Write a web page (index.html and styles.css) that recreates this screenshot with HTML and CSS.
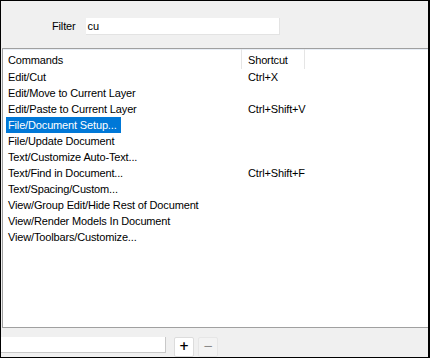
FILE: index.html
```html
<!DOCTYPE html>
<html>
<head>
<meta charset="utf-8">
<link rel="stylesheet" href="styles.css">
</head>
<body>
<div class="window">
  <div class="filter-bar">
    <span class="filter-label">Filter</span>
    <div class="filter-input">cu</div>
  </div>
  <div class="list">
    <div class="row header">
      <div class="cell cmd">Commands</div>
      <div class="cell sc">Shortcut</div>
      <div class="cell rest"></div>
    </div>
    <div class="row"><div class="cell cmd"><span class="txt">Edit/Cut</span></div><div class="cell sc">Ctrl+X</div></div>
    <div class="row"><div class="cell cmd"><span class="txt">Edit/Move to Current Layer</span></div><div class="cell sc"></div></div>
    <div class="row"><div class="cell cmd"><span class="txt">Edit/Paste to Current Layer</span></div><div class="cell sc">Ctrl+Shift+V</div></div>
    <div class="row"><div class="cell cmd"><span class="txt selected">File/Document Setup...</span></div><div class="cell sc"></div></div>
    <div class="row"><div class="cell cmd"><span class="txt">File/Update Document</span></div><div class="cell sc"></div></div>
    <div class="row"><div class="cell cmd"><span class="txt">Text/Customize Auto-Text...</span></div><div class="cell sc"></div></div>
    <div class="row"><div class="cell cmd"><span class="txt">Text/Find in Document...</span></div><div class="cell sc">Ctrl+Shift+F</div></div>
    <div class="row"><div class="cell cmd"><span class="txt">Text/Spacing/Custom...</span></div><div class="cell sc"></div></div>
    <div class="row"><div class="cell cmd"><span class="txt">View/Group Edit/Hide Rest of Document</span></div><div class="cell sc"></div></div>
    <div class="row"><div class="cell cmd"><span class="txt">View/Render Models In Document</span></div><div class="cell sc"></div></div>
    <div class="row"><div class="cell cmd"><span class="txt">View/Toolbars/Customize...</span></div><div class="cell sc"></div></div>
  </div>
  <div class="bottom-bar">
    <div class="bottom-input"></div>
    <div class="btn">+</div>
    <div class="btn disabled">−</div>
  </div>
</div>
</body>
</html>
```
FILE: styles.css
```css
html, body {
  margin: 0;
  padding: 0;
  background: #ffffff;
}
.window {
  box-sizing: border-box;
  width: 430px;
  height: 358px;
  border: 1px solid #000;
  border-right-width: 2px;
  background: #f0f0f0;
  font-family: "Liberation Sans", Arial, sans-serif;
  font-size: 11px;
  letter-spacing: -0.15px;
  color: #000;
  display: flex;
  flex-direction: column;
  overflow: hidden;
}
.filter-bar {
  height: 47px;
  box-sizing: border-box;
  padding: 17px 0 0 51px;
  display: flex;
  align-items: flex-start;
  gap: 10px;
}
.filter-label {
  line-height: 17px;
  height: 17px;
  color: #000;
}
.filter-input {
  width: 194px;
  height: 17px;
  box-sizing: border-box;
  background: #fff;
  border-bottom: 1px solid #e3e3e3;
  border-right: 1px solid #e3e3e3;
  padding-left: 2px;
  line-height: 17px;
}
.list {
  margin-left: 1px;
  height: 281px;
  box-sizing: border-box;
  border: 1px solid #a0a0a0;
  border-right: none;
  background: #fff;
  box-shadow: inset 0 1px 0 #e8eef6;
}
.row {
  display: flex;
  height: 16px;
  line-height: 17px;
}
.row.header {
  height: 20px;
  line-height: 22px;
}
.cell.cmd {
  width: 239px;
  padding-left: 3px;
  box-sizing: border-box;
  white-space: nowrap;
}
.cell.sc {
  width: 63px;
  padding-left: 6px;
  box-sizing: border-box;
  white-space: nowrap;
}
.header .cell.cmd {
  padding-left: 5px;
  border-right: 1px solid #e5e5e5;
}
.header .cell.sc {
  border-right: 1px solid #e5e5e5;
}
.txt {
  display: inline-block;
  padding: 0 2px;
  height: 16px;
  vertical-align: top;
}
.txt.selected {
  background: #0078d7;
  color: #fff;
  padding-left: 2px;
  padding-right: 4px;
}
.bottom-bar {
  flex: 1;
  display: flex;
  align-items: flex-start;
  padding-top: 9px;
}
.bottom-input {
  width: 165px;
  height: 16px;
  box-sizing: border-box;
  background: #fff;
  border-bottom: 1px solid #c8c8c8;
  border-right: 1px solid #c8c8c8;
}
.btn {
  width: 20px;
  height: 20px;
  box-sizing: border-box;
  margin-left: 8px;
  border: 1px solid #dcdcdc;
  border-radius: 2px;
  background: #fff;
  font-family: "DejaVu Sans", sans-serif;
  font-weight: bold;
  font-size: 12px;
  line-height: 17px;
  text-align: center;
  letter-spacing: 0;
}
.btn.disabled {
  margin-left: 4px;
  background: #f3f3f3;
  border-color: #e6e6e6;
  color: #8a8a8a;
  font-weight: normal;
}
```
